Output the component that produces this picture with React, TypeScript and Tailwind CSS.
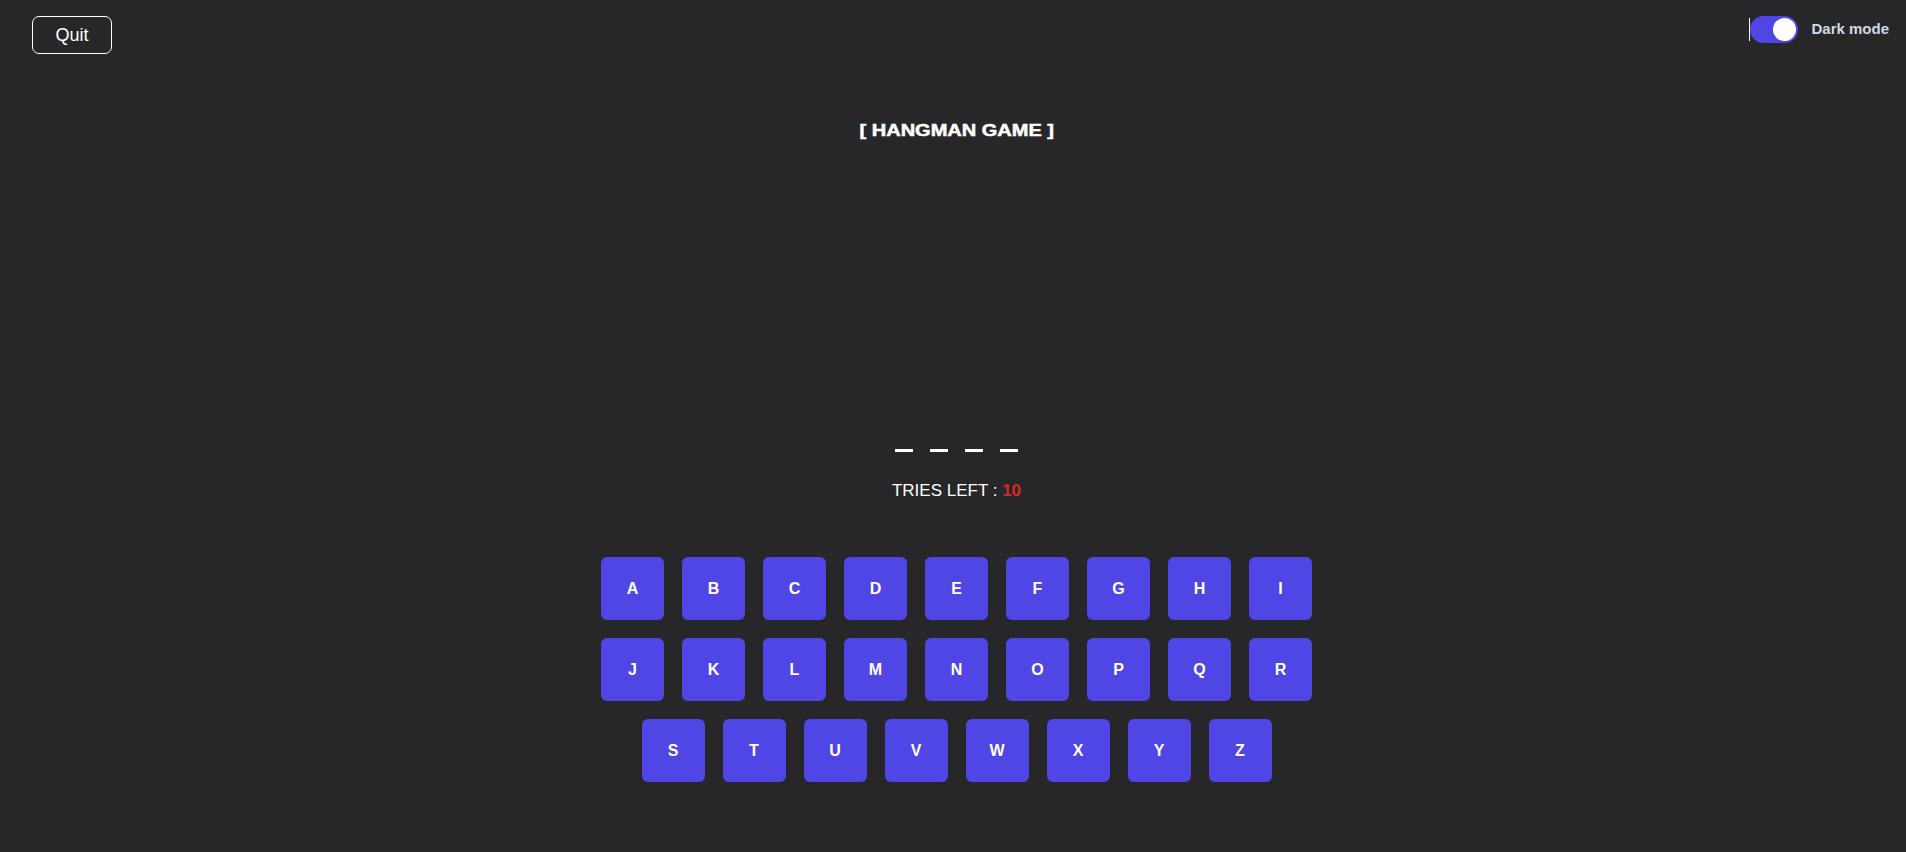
import React from "react";

const rows = [
  ["A", "B", "C", "D", "E", "F", "G", "H", "I"],
  ["J", "K", "L", "M", "N", "O", "P", "Q", "R"],
  ["S", "T", "U", "V", "W", "X", "Y", "Z"],
];

export default function App() {
  return (
    <div
      className="min-h-screen w-full bg-[#272729] text-white"
      style={{ fontFamily: '"Liberation Sans", Arial, sans-serif' }}
    >
      <div className="flex items-start justify-between pl-8 pr-[17px] pt-4">
        <button className="h-[38px] w-[80px] rounded-[7px] border border-white text-[18px] leading-none text-white">
          Quit
        </button>
        <div className="flex items-center">
          <div className="h-[23px] w-px bg-white" />
          <div className="flex h-[27px] w-[48px] items-center justify-end rounded-full bg-[#4f46e5] pr-[2px]">
            <div className="h-[23px] w-[23px] rounded-full bg-white" />
          </div>
          <span className="ml-[13px] text-[15px] font-bold text-[#d4d8e2]">Dark mode</span>
        </div>
      </div>

      <div className="flex flex-col items-center pl-[7px]">
        <h1 className="mt-[65px] scale-x-[1.25] text-[16px] font-bold leading-6 text-white [-webkit-text-stroke:0.5px_white]">
          [ HANGMAN GAME ]
        </h1>
        <div className="h-[306px]" />
        <div className="flex gap-[17px]">
          {[0, 1, 2, 3].map((i) => (
            <div key={i} className="h-[3px] w-[18px] bg-white" />
          ))}
        </div>
        <div className="mt-[25px] text-[17px] leading-7 text-white">
          TRIES LEFT : <span className="font-bold text-[#dc2626]">10</span>
        </div>
        <div className="mt-[52px] flex flex-col items-center gap-[18px]">
          {rows.map((row, ri) => (
            <div key={ri} className="flex gap-[18px]">
              {row.map((l) => (
                <button
                  key={l}
                  className="flex h-[63px] w-[63px] items-center justify-center rounded-[6px] bg-[#4f46e5] text-[16px] font-bold text-white"
                >
                  {l}
                </button>
              ))}
            </div>
          ))}
        </div>
      </div>
    </div>
  );
}
